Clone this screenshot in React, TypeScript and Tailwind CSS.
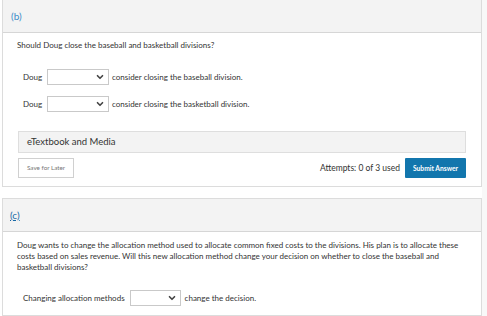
import { ChevronDown } from 'lucide-react';

function Dropdown({ width }: { width: string }) {
  return (
    <div
      className={`${width} h-[16px] border border-[#c9c9c9] bg-white flex items-center justify-end pr-[3px]`}
    >
      <ChevronDown className="w-[10px] h-[10px] text-[#444]" strokeWidth={4} />
    </div>
  );
}

export default function App() {
  return (
    <div
      className="w-[487px] h-[316px] overflow-hidden bg-white flex text-[#333]"
      style={{ fontFamily: 'Lato, "Open Sans", sans-serif' }}
    >
      <div className="w-[482px] pl-[2px] flex flex-col">
        {/* part b */}
        <section className="border-x border-b border-[#dcdcdc]">
          <header className="h-[33px] bg-[#f3f3f3] border-b border-[#d6d6d6] flex items-center px-[8px]">
            <span className="text-[10px] text-[#3c8cc8]">(b)</span>
          </header>
          <div className="pl-[14px] pr-[15px] pt-[7px] pb-[8px]">
            <p className="text-[8px] leading-[10px]">
              Should Doug close the baseball and basketball divisions?
            </p>
            <div className="mt-[19px] pl-[6px] flex items-center gap-[3px] text-[8px]">
              <span className="w-[21px]">Doug</span>
              <Dropdown width="w-[62px]" />
              <span>consider closing the baseball division.</span>
            </div>
            <div className="mt-[11px] pl-[6px] flex items-center gap-[3px] text-[8px]">
              <span className="w-[21px]">Doug</span>
              <Dropdown width="w-[62px]" />
              <span>consider closing the basketball division.</span>
            </div>
            <div className="mt-[19px] ml-[1px] h-[22px] bg-[#f3f3f3] border border-[#dedede] flex items-center px-[8px] text-[9.5px] text-[#333]">
              eTextbook and Media
            </div>
            <div className="mt-[5px] ml-[1px] flex items-center">
              <button className="h-[20px] px-[8px] border border-[#d0d0d0] bg-white text-[6.3px] text-[#777]">
                Save for Later
              </button>
              <span className="ml-auto text-[8.5px] text-[#333]">Attempts: 0 of 3 used</span>
              <button className="ml-[5px] h-[20px] w-[61px] bg-[#1276ad] text-white text-[6.7px] font-bold rounded-[1px]">
                Submit Answer
              </button>
            </div>
          </div>
        </section>

        {/* part c */}
        <section className="mt-[11px] border border-[#dcdcdc] flex-1">
          <header className="h-[33px] bg-[#f3f3f3] border-b border-[#d6d6d6] flex items-center px-[7px]">
            <span className="text-[10px] text-[#1768a6] underline">(c)</span>
          </header>
          <div className="pl-[14px] pr-[20px] pt-[8px]">
            <p className="max-w-[444px] text-[8px] leading-[11px]">
              Doug wants to change the allocation method used to allocate common fixed costs to the divisions. His
              plan is to allocate these costs based on sales revenue. Will this new allocation method change your
              decision on whether to close the baseball and basketball divisions?
            </p>
            <div className="mt-[17px] pl-[6px] flex items-center gap-[4px] text-[8px]">
              <span className="mr-[1px]">Changing allocation methods</span>
              <Dropdown width="w-[51px]" />
              <span>change the decision.</span>
            </div>
          </div>
        </section>
      </div>
      <div className="flex-1 bg-[#f8f8f8]" />
    </div>
  );
}
